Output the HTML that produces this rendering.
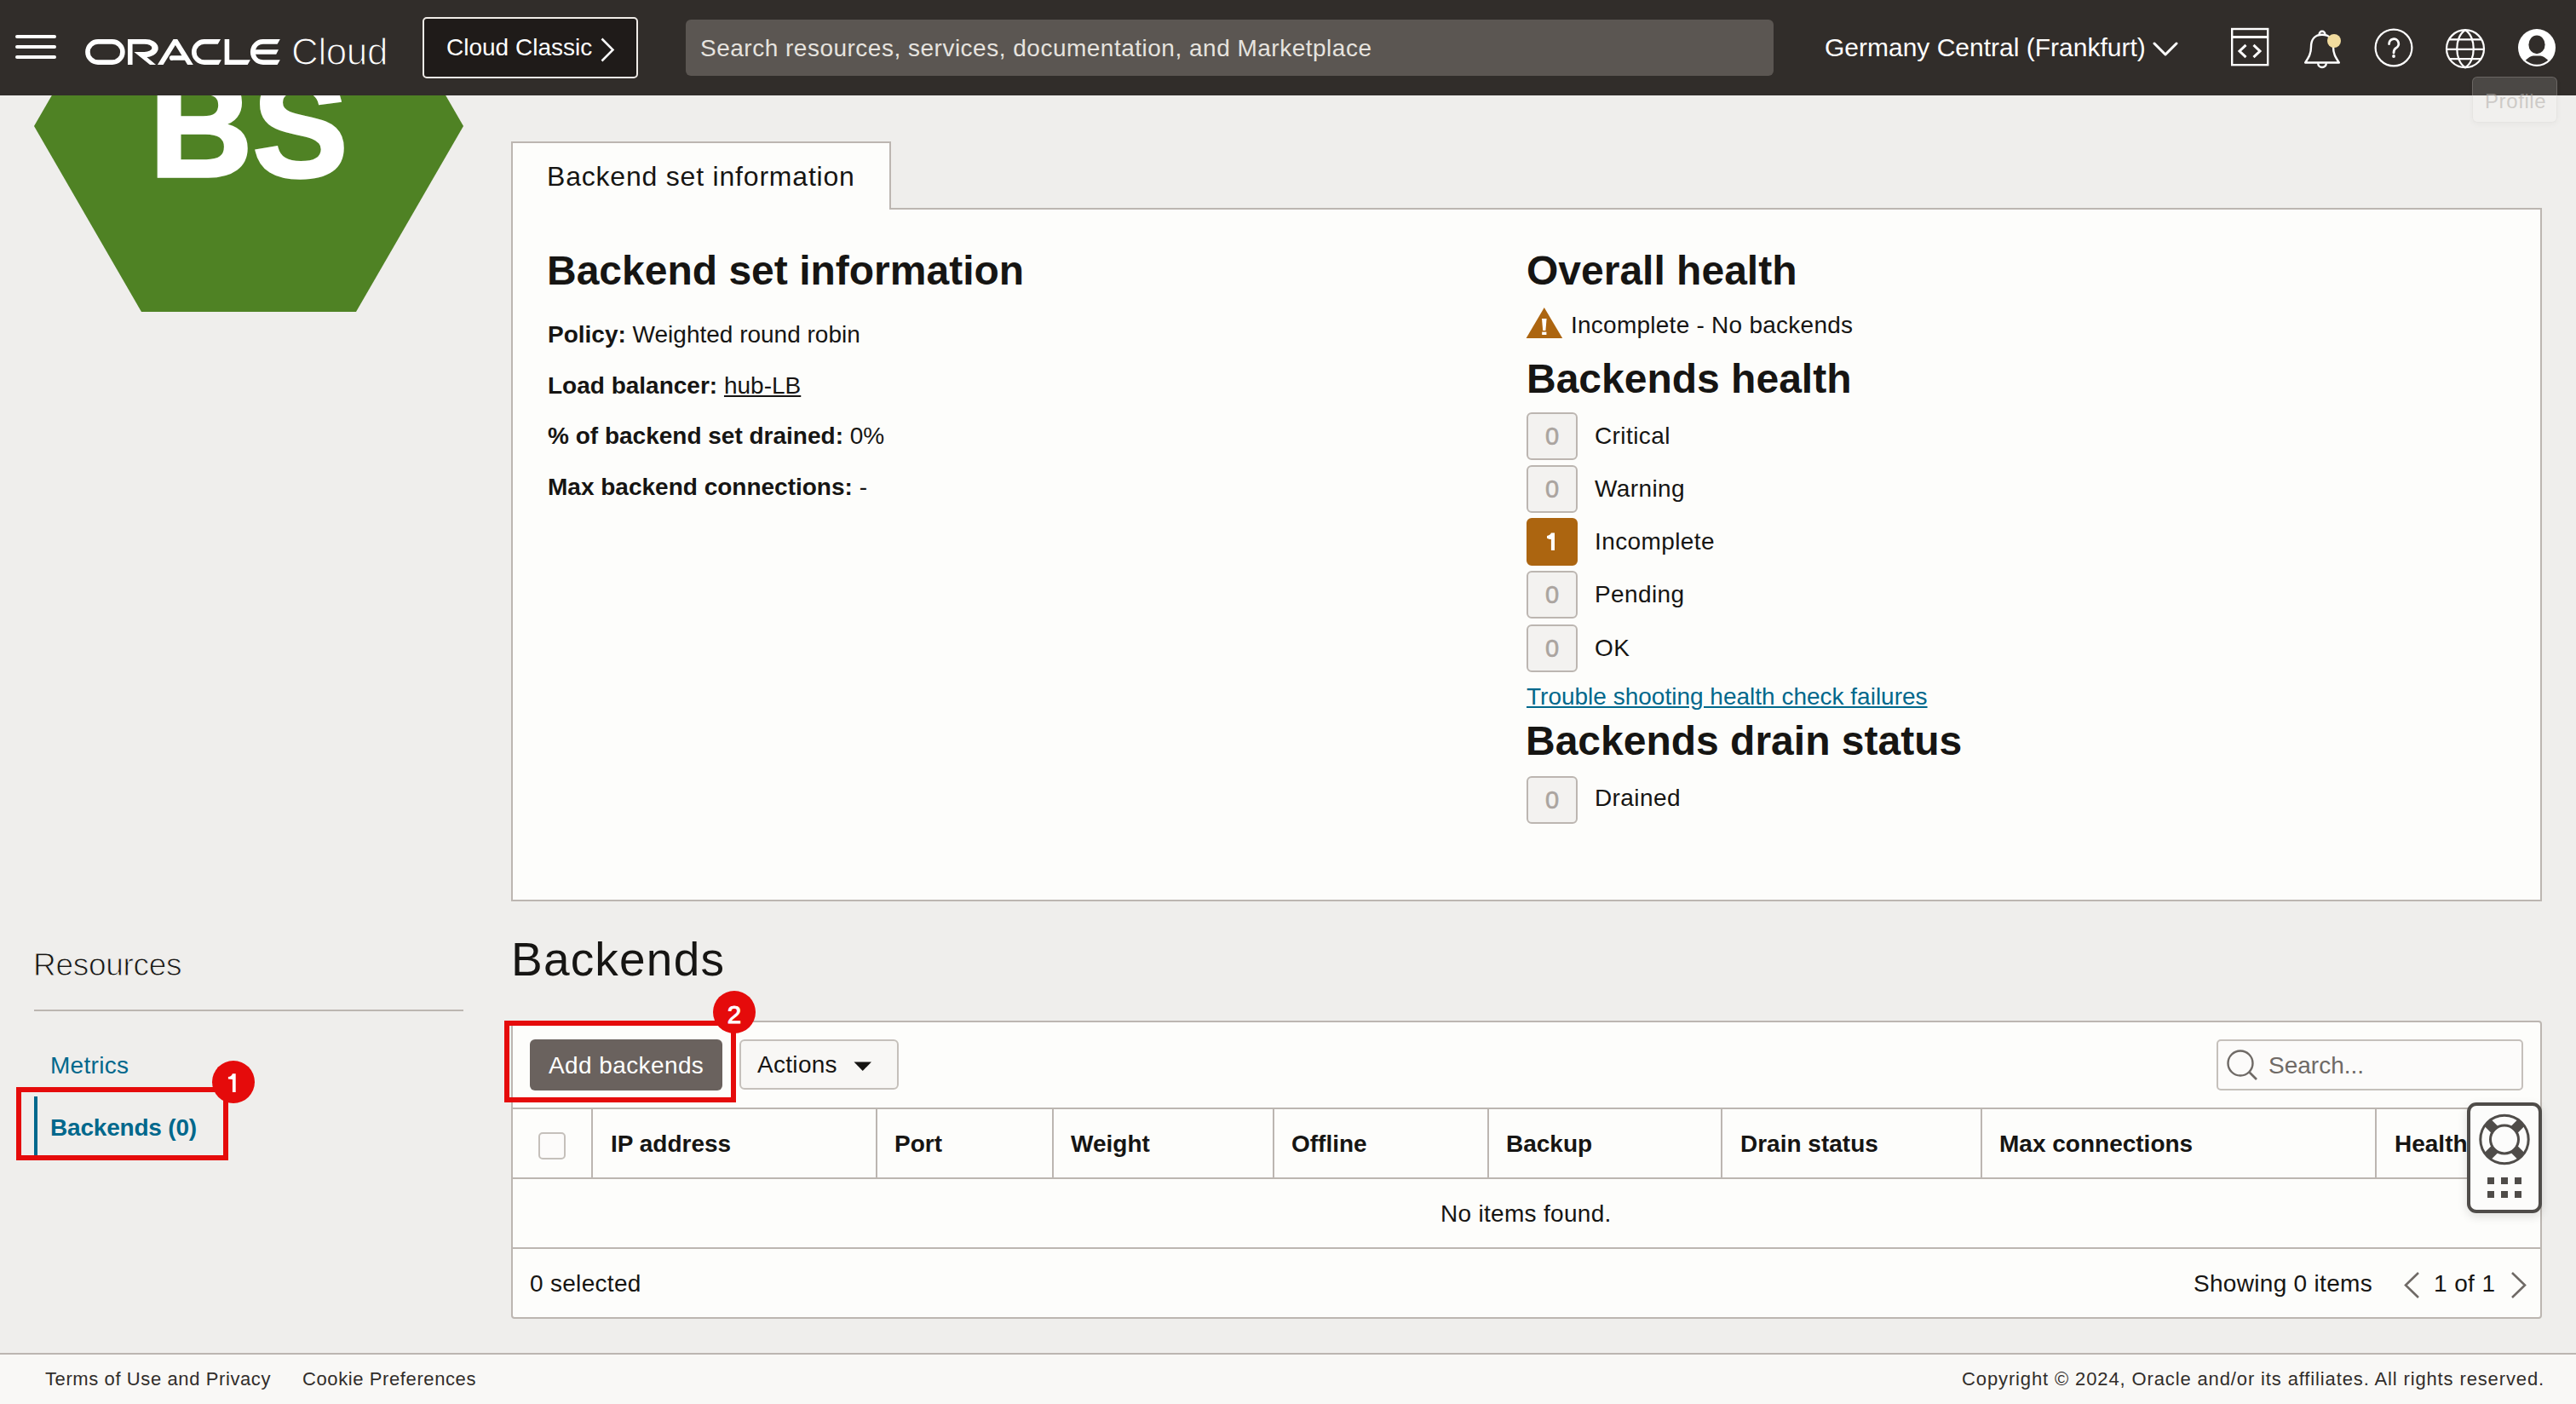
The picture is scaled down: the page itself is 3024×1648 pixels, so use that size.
<!DOCTYPE html>
<html><head><meta charset="utf-8">
<style>
*{margin:0;padding:0;box-sizing:border-box}
html,body{width:3024px;height:1648px;overflow:hidden}
body{position:relative;background:#efeeec;font-family:"Liberation Sans",sans-serif;color:#161513}
.a{position:absolute;white-space:nowrap;line-height:1}
.t28{font-size:28px;letter-spacing:0.3px}
.t28 b{letter-spacing:0}
.b{font-weight:bold;letter-spacing:0}
#hdr{position:absolute;left:0;top:0;width:3024px;height:112px;background:#312d2a}
.card{position:absolute;background:#fdfdfb;border:2px solid #bcb6b1}
.badge{position:absolute;left:1792px;width:60px;height:56px;border:2px solid #bcb6b1;border-radius:6px;background:#f3f2f0;color:#aaa49f;font-size:29px;line-height:52px;-webkit-text-stroke:0.6px currentColor;text-align:center}
.lbl{position:absolute;left:1872px;font-size:28px;letter-spacing:0.4px;line-height:1;white-space:nowrap}
.vline{position:absolute;width:2px;background:#bcb6b1}
.hline{position:absolute;height:2px;background:#bcb6b1}
.th{position:absolute;top:1329px;font-size:28px;font-weight:bold;line-height:1;white-space:nowrap}
</style></head><body>

<!-- HEADER -->
<div id="hdr">
  <!-- hamburger -->
  <svg class="a" style="left:0;top:0" width="90" height="112">
    <g stroke="#fff" stroke-width="4" stroke-linecap="round"><line x1="20" y1="43" x2="64" y2="43"/><line x1="20" y1="55" x2="64" y2="55"/><line x1="20" y1="67" x2="64" y2="67"/></g>
  </svg>
  <!-- ORACLE logo -->
  <svg class="a" style="left:95px;top:40px" width="240" height="40" viewBox="0 0 2576 429">
    <g fill="#fff" fill-rule="evenodd">
      <path d="M215,65 H395 A160,160 0 0 1 395,385 H215 A160,160 0 0 1 215,65 Z M215,125 A100,100 0 0 0 215,325 H395 A100,100 0 0 0 395,125 Z"/>
      <path d="M590,65 H800 A160,112.5 0 0 1 830,289 L945,385 H870 L670,225 H650 V385 H590 Z M650,125 V225 H800 A95,50 0 0 0 800,125 Z"/>
      <path d="M1165,65 H1215 L1415,385 H1343 L1309,330 H1160 A30,30 0 0 1 1135,270 H1271 L1190,140 L1037,385 H965 Z"/>
      <path d="M1760,65 L1725,125 H1555 A100,100 0 0 0 1555,325 H1770 L1735,385 H1555 A160,160 0 0 1 1555,65 Z"/>
      <path d="M1810,65 H1870 V325 H2135 L2100,385 H1810 Z"/>
      <path d="M2510,65 L2475,125 H2295 A100,100 0 0 0 2200,195 H2490 L2460,255 H2200 A100,100 0 0 0 2295,325 H2510 L2475,385 H2295 A160,160 0 0 1 2295,65 Z"/>
    </g>
  </svg>
  <div class="a" style="left:342px;top:39px;font-size:44px;letter-spacing:-0.4px;color:#fff;-webkit-text-stroke:1.2px #312d2a">Cloud</div>
  <!-- Cloud Classic button -->
  <div style="position:absolute;left:496px;top:20px;width:253px;height:72px;border:2px solid #efebe7;border-radius:5px;background:#1f1b19"></div>
  <div class="a" style="left:524px;top:42px;font-size:28px;letter-spacing:0;color:#fff">Cloud Classic</div>
  <svg class="a" style="left:700px;top:40px" width="26" height="36"><polyline points="6.5,5.5 19.5,18.5 6.5,31.5" fill="none" stroke="#fff" stroke-width="2.5"/></svg>
  <!-- search -->
  <div style="position:absolute;left:805px;top:23px;width:1277px;height:66px;background:#5b5652;border-radius:6px"></div>
  <div class="a" style="left:822px;top:43px;font-size:28px;letter-spacing:0.5px;color:#e6e3df">Search resources, services, documentation, and Marketplace</div>
  <!-- region -->
  <div class="a" style="left:2142px;top:41px;font-size:30px;color:#fff">Germany Central (Frankfurt)</div>
  <svg class="a" style="left:2525px;top:41px" width="36" height="36"><polyline points="4,10 17,23 30,10" fill="none" stroke="#fff" stroke-width="3" stroke-linecap="round" stroke-linejoin="round"/></svg>
  <!-- code icon -->
  <svg class="a" style="left:2600px;top:20px" width="80" height="80">
    <g fill="none" stroke="#fff" stroke-width="2.4">
      <rect x="20.2" y="14" width="42" height="42.2"/>
      <line x1="20" y1="23.5" x2="62" y2="23.5" stroke-width="3"/>
      <polyline points="36.5,32.8 29,40 36.5,47.2" stroke-width="3"/>
      <polyline points="45.5,32.8 53,40 45.5,47.2" stroke-width="3"/>
    </g>
  </svg>
  <!-- bell -->
  <svg class="a" style="left:2690px;top:20px" width="80" height="80">
    <g fill="none" stroke="#fff" stroke-width="2.4" stroke-linejoin="round">
      <path d="M32.6,20.2 A3.4,3.4 0 1 1 39.4,20.2"/>
      <path d="M36,20.7 C27.5,20.7 23,26.5 23,35 C23,43 20.5,47 16.2,53.5 H55.8 C51.5,47 49,43 49,35 C49,26.5 44.5,20.7 36,20.7 Z"/>
      <path d="M31.2,54.2 A4.8,4.8 0 0 0 40.8,54.2"/>
    </g>
    <circle cx="50" cy="28" r="8" fill="#f2dc9e"/>
  </svg>
  <!-- help -->
  <svg class="a" style="left:2770px;top:16px" width="80" height="80">
    <circle cx="40" cy="40" r="21.4" fill="none" stroke="#fff" stroke-width="2.2"/>
    <path d="M34.6,35.6 A5.6,5.6 0 1 1 42.6,40.4 C40.6,41.8 40,43 40,46" fill="none" stroke="#fff" stroke-width="2.8" stroke-linecap="round"/>
    <circle cx="40" cy="50" r="1.9" fill="#fff"/>
  </svg>
  <!-- globe -->
  <svg class="a" style="left:2854px;top:17px" width="80" height="80">
    <g fill="none" stroke="#fff" stroke-width="2.2">
      <circle cx="40" cy="40.2" r="22"/>
      <path d="M40,18.2 C27,26 27,54.4 40,62.2 C53,54.4 53,26 40,18.2 Z"/>
      <line x1="18" y1="40.8" x2="62" y2="40.8"/>
      <line x1="21" y1="29.4" x2="59" y2="29.4"/>
      <line x1="21" y1="52.2" x2="59" y2="52.2"/>
    </g>
  </svg>
  <!-- profile -->
  <svg class="a" style="left:2938px;top:16px" width="80" height="80">
    <defs><clipPath id="pc"><circle cx="40" cy="40" r="19.8"/></clipPath></defs>
    <circle cx="40" cy="40" r="22" fill="#fff"/>
    <ellipse cx="40" cy="36.4" rx="9.6" ry="10.8" fill="#312d2a"/>
    <g clip-path="url(#pc)"><path d="M16,60 L26.7,54.8 C30,51.5 33,49.4 35.7,49.4 H44.3 C47,49.4 50,51.5 53.3,54.8 L64,60 V70 H16 Z" fill="#312d2a"/></g>
  </svg>
</div>

<!-- HEXAGON -->
<svg class="a" style="left:0;top:112px" width="600" height="260" viewBox="0 112 600 260">
  <polygon points="40,148 166,-70 418,-70 544,148 418,366 166,366" fill="#4f8224"/>
  <text x="292" y="207" text-anchor="middle" font-family="Liberation Sans" font-weight="bold" font-size="168" fill="#fff" stroke="#fff" stroke-width="3.5">BS</text>
</svg>

<!-- CARD -->
<div class="card" style="left:600px;top:244px;width:2384px;height:814px"></div>
<div class="card" style="left:600px;top:166px;width:446px;height:80px;border-bottom:none"></div>
<div class="a" style="left:642px;top:191px;font-size:32px;letter-spacing:0.8px">Backend set information</div>

<div class="a b" style="left:642px;top:294px;font-size:48px">Backend set information</div>
<div class="a t28" style="left:643px;top:379px;letter-spacing:0"><b>Policy:</b> Weighted round robin</div>
<div class="a t28" style="left:643px;top:439px;letter-spacing:0"><b>Load balancer:</b> <u>hub-LB</u></div>
<div class="a t28" style="left:643px;top:498px;letter-spacing:0"><b>% of backend set drained:</b> 0%</div>
<div class="a t28" style="left:643px;top:558px;letter-spacing:0"><b>Max backend connections:</b> -</div>

<div class="a b" style="left:1792px;top:294px;font-size:48px">Overall health</div>
<svg class="a" style="left:1788px;top:358px" width="50" height="42" viewBox="1788 358 50 42">
  <polygon points="1812.8,361 1834.2,397 1791.6,397" fill="#ac6510"/>
  <polygon points="1810,374 1815.6,374 1814.4,388 1811.2,388" fill="#fff"/>
  <rect x="1810.2" y="389.6" width="5.2" height="3.4" fill="#fff"/>
</svg>
<div class="a t28" style="left:1844px;top:368px;letter-spacing:0.25px">Incomplete - No backends</div>
<div class="a b" style="left:1792px;top:421px;font-size:48px">Backends health</div>

<div class="badge" style="top:484px">0</div><div class="lbl" style="top:498px">Critical</div>
<div class="badge" style="top:546px">0</div><div class="lbl" style="top:560px">Warning</div>
<div class="badge" style="top:608px;background:#ac6510;border-color:#ac6510;color:#fff"></div><svg class="a" style="left:1800px;top:615px" width="40" height="40" viewBox="1800 615 40 40"><path d="M1820.9,625.6 H1825 V645.9 H1820.9 V633 C1819.4,633 1817.4,632.6 1816,631.8 V629 C1818.4,628.8 1820.4,627.4 1820.9,625.6 Z" fill="#fff"/></svg><div class="lbl" style="top:622px">Incomplete</div>
<div class="badge" style="top:670px">0</div><div class="lbl" style="top:684px">Pending</div>
<div class="badge" style="top:733px">0</div><div class="lbl" style="top:747px">OK</div>
<div class="a t28" style="left:1792px;top:804px;letter-spacing:0;color:#00688c;text-decoration:underline">Trouble shooting health check failures</div>
<div class="a b" style="left:1791px;top:846px;font-size:48px">Backends drain status</div>
<div class="badge" style="top:911px">0</div><div class="lbl" style="top:923px">Drained</div>

<!-- RESOURCES -->
<div class="a" style="left:39px;top:1114px;font-size:37px;letter-spacing:-0.3px;-webkit-text-stroke:0.9px #efeeec">Resources</div>
<div class="hline" style="left:40px;top:1185px;width:504px"></div>
<div class="a t28" style="left:59px;top:1237px;color:#00688c">Metrics</div>
<div style="position:absolute;left:40px;top:1287px;width:4px;height:69px;background:#00688c"></div>
<div class="a b" style="left:59px;top:1310px;font-size:28px;letter-spacing:-0.2px;color:#00688c">Backends (0)</div>

<!-- BACKENDS -->
<div class="a" style="left:600px;top:1099px;font-size:55px;letter-spacing:1.2px">Backends</div>
<div class="card" style="left:600px;top:1198px;width:2384px;height:350px;border-radius:4px"></div>
<!-- toolbar -->
<div style="position:absolute;left:622px;top:1220px;width:226px;height:60px;background:#6a625e;border-radius:6px"></div>
<div class="a" style="left:644px;top:1237px;font-size:28px;letter-spacing:0.4px;color:#fff">Add backends</div>
<div style="position:absolute;left:868px;top:1220px;width:187px;height:59px;background:#f8f7f5;border:2px solid #c5c0bb;border-radius:6px"></div>
<div class="a t28" style="left:889px;top:1236px">Actions</div>
<svg class="a" style="left:1000px;top:1244px" width="26" height="16"><polygon points="2.5,2.5 23,2.5 12.75,13" fill="#161513"/></svg>
<div style="position:absolute;left:2602px;top:1220px;width:360px;height:60px;background:#fcfbfa;border:2px solid #c5c0bb;border-radius:5px"></div>
<svg class="a" style="left:2608px;top:1226px" width="48" height="48"><circle cx="22" cy="22" r="14.5" fill="none" stroke="#6f6a66" stroke-width="2.4"/><line x1="32.5" y1="32.5" x2="41" y2="41" stroke="#6f6a66" stroke-width="2.6"/></svg>
<div class="a" style="left:2663px;top:1237px;font-size:28px;letter-spacing:0;color:#6f6a66">Search...</div>
<!-- header row -->
<div class="hline" style="left:601px;top:1300px;width:2382px"></div>
<div class="hline" style="left:601px;top:1382px;width:2382px"></div>
<div class="hline" style="left:601px;top:1464px;width:2382px"></div>
<div class="vline" style="left:694px;top:1300px;height:84px"></div>
<div class="vline" style="left:1028px;top:1300px;height:84px"></div>
<div class="vline" style="left:1235px;top:1300px;height:84px"></div>
<div class="vline" style="left:1494px;top:1300px;height:84px"></div>
<div class="vline" style="left:1746px;top:1300px;height:84px"></div>
<div class="vline" style="left:2020px;top:1300px;height:84px"></div>
<div class="vline" style="left:2325px;top:1300px;height:84px"></div>
<div class="vline" style="left:2788px;top:1300px;height:84px"></div>
<div style="position:absolute;left:632px;top:1329px;width:32px;height:32px;border:2px solid #c5c0bb;border-radius:5px;background:#fcfbfa"></div>
<div class="th" style="left:717px">IP address</div>
<div class="th" style="left:1050px">Port</div>
<div class="th" style="left:1257px">Weight</div>
<div class="th" style="left:1516px">Offline</div>
<div class="th" style="left:1768px">Backup</div>
<div class="th" style="left:2043px">Drain status</div>
<div class="th" style="left:2347px">Max connections</div>
<div class="th" style="left:2811px">Health</div>
<div class="a t28" style="left:1691px;top:1411px">No items found.</div>
<div class="a t28" style="left:622px;top:1493px">0 selected</div>
<div class="a t28" style="left:2575px;top:1493px">Showing 0 items</div>
<svg class="a" style="left:2815px;top:1490px" width="160" height="40">
  <polyline points="24,4 9,18.5 24,33" fill="none" stroke="#6f6a66" stroke-width="2.6"/>
  <polyline points="134,4 149,18.5 134,33" fill="none" stroke="#6f6a66" stroke-width="2.6"/>
</svg>
<div class="a t28" style="left:2857px;top:1493px;letter-spacing:0.4px">1 of 1</div>
<!-- help widget -->
<div style="position:absolute;left:2896px;top:1294px;width:88px;height:130px;background:#fcfcfb;border:4px solid #4f4c49;border-radius:11px;box-shadow:0 4px 12px rgba(0,0,0,0.12)"></div>
<svg class="a" style="left:2900px;top:1298px" width="80" height="122" viewBox="2900 1298 80 122">
  <defs><clipPath id="ring"><path d="M2940,1337.5 m-28.2,0 a28.2,28.2 0 1 0 56.4,0 a28.2,28.2 0 1 0 -56.4,0 Z M2940,1337.5 m-16.5,0 a16.5,16.5 0 1 0 33,0 a16.5,16.5 0 1 0 -33,0 Z" clip-rule="evenodd"/></clipPath></defs>
  <circle cx="2940" cy="1337.5" r="28.2" fill="none" stroke="#4f4c49" stroke-width="3"/>
  <circle cx="2940" cy="1337.5" r="16.5" fill="none" stroke="#4f4c49" stroke-width="3"/>
  <g clip-path="url(#ring)" stroke="#4f4c49" stroke-width="11">
    <line x1="2918" y1="1315.5" x2="2962" y2="1359.5"/>
    <line x1="2962" y1="1315.5" x2="2918" y2="1359.5"/>
  </g>
  <g fill="#4f4c49">
    <rect x="2920" y="1382" width="8" height="8"/><rect x="2936" y="1382" width="8" height="8"/><rect x="2952" y="1382" width="8" height="8"/>
    <rect x="2920" y="1398" width="8" height="8"/><rect x="2936" y="1398" width="8" height="8"/><rect x="2952" y="1398" width="8" height="8"/>
  </g>
</svg>
<!-- annotations -->
<div style="position:absolute;left:592px;top:1198px;width:272px;height:96px;border:6px solid #e50b0b"></div>
<div style="position:absolute;left:837px;top:1163px;width:50px;height:50px;border-radius:50%;background:#e50b0b"></div>
<div class="a" style="left:837px;top:1176px;width:50px;text-align:center;font-size:29.5px;color:#fff;-webkit-text-stroke:1px #fff">2</div>
<div style="position:absolute;left:19px;top:1276px;width:249px;height:86px;border:6px solid #e50b0b"></div>
<div style="position:absolute;left:249px;top:1245px;width:50px;height:50px;border-radius:50%;background:#e50b0b"></div>
<svg class="a" style="left:250px;top:1250px" width="40" height="40" viewBox="250 1250 40 40"><path d="M272.9,1260.2 H276.7 V1281.9 H272.9 V1267 C271.4,1267 269.5,1266.8 267.9,1266.6 V1264 C270.2,1263.8 272.3,1262.4 272.9,1260.2 Z" fill="#fff"/></svg>
<!-- tooltip -->
<div style="position:absolute;left:2902px;top:90px;width:100px;height:54px;border-radius:6px;background:rgba(255,255,255,0.13);border:1px solid rgba(200,195,190,0.25);box-shadow:0 2px 6px rgba(0,0,0,0.04)"></div>
<div class="a" style="left:2917px;top:107px;font-size:24px;letter-spacing:0.6px;color:rgba(175,170,165,0.55)">Profile</div>

<!-- FOOTER -->
<div style="position:absolute;left:0;top:1588px;width:3024px;height:60px;background:#f9f8f6;border-top:2px solid #bcb6b1"></div>
<div class="a" style="left:53px;top:1608px;font-size:22px;letter-spacing:0.6px;color:#312d2a">Terms of Use and Privacy</div>
<div class="a" style="left:355px;top:1608px;font-size:22px;letter-spacing:0.6px;color:#312d2a">Cookie Preferences</div>
<div class="a" style="right:37px;top:1608px;font-size:22px;letter-spacing:0.87px;color:#312d2a">Copyright © 2024, Oracle and/or its affiliates. All rights reserved.</div>

</body></html>
